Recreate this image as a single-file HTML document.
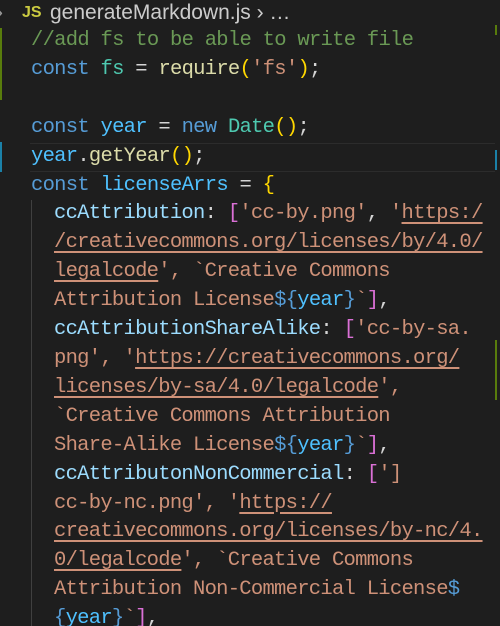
<!DOCTYPE html>
<html><head><meta charset="utf-8"><style>
html,body{margin:0;padding:0;width:500px;height:626px;overflow:hidden;background:#1e1e1e;}
body{position:relative;font-family:"Liberation Mono",monospace;}
.hdr{position:absolute;left:0;top:0;width:500px;height:26px;font-family:"Liberation Sans",sans-serif;font-size:21px;color:#cccccc;line-height:26px;}
.code{position:absolute;left:31px;top:27px;font-size:20.5px;letter-spacing:-0.72px;line-height:28.9px;white-space:pre;color:#d4d4d4;}
.k{color:#569cd6}.v{color:#4fc1ff}.c{color:#6a9955}.f{color:#dcdcaa}.y{color:#ffd700}.p{color:#da70d6}.s{color:#ce9178}.t{color:#4ec9b0}.pr{color:#9cdcfe}
.u{text-decoration:underline;text-underline-offset:4px}
.ind{margin-left:23px}
</style></head><body>
<div class="hdr"><span style="position:absolute;left:-4px;color:#999">›</span><span style="position:absolute;left:22px;color:#cbcb41;font-weight:bold;font-size:16px">JS</span><span style="position:absolute;left:50px">generateMarkdown.js › …</span></div>
<div style="position:absolute;left:0;top:28px;width:2px;height:72px;background:#587c0c"></div>
<div style="position:absolute;left:0;top:142px;width:2px;height:30px;background:#1b81a8"></div>
<div style="position:absolute;left:30px;top:143px;width:465px;height:27px;border-top:1px solid #2c2c2c;border-bottom:1px solid #2c2c2c"></div>
<div style="position:absolute;left:31px;top:200px;width:1px;height:426px;background:#404040"></div>
<div style="position:absolute;left:495px;top:25px;width:2px;height:10px;background:#587c0c"></div>
<div style="position:absolute;left:495px;top:150px;width:2px;height:20px;background:#1b81a8"></div>
<div style="position:absolute;left:495px;top:340px;width:2px;height:60px;background:#587c0c"></div>
<div class="code"><span class="c">//add fs to be able to write file</span>
<span class="k">const</span> <span class="t">fs</span> = <span class="f">require</span><span class="y">(</span><span class="s">'fs'</span><span class="y">)</span>;

<span class="k">const</span> <span class="v">year</span> = <span class="k">new</span> <span class="t">Date</span><span class="y">()</span>;
<span class="v">year</span>.<span class="f">getYear</span><span class="y">()</span>;
<span class="k">const</span> <span class="v">licenseArrs</span> = <span class="y">{</span>
<span class="ind"><span class="pr">ccAttribution</span>: <span class="p">[</span><span class="s">'cc-by.png'</span>, <span class="s">'<span class="u">https:/</span></span></span>
<span class="ind s"><span class="u">/creativecommons.org/licenses/by/4.0/</span></span>
<span class="ind s"><span class="u">legalcode</span>', `Creative Commons</span>
<span class="ind"><span class="s">Attribution License</span><span class="k">${</span><span class="v">year</span><span class="k">}</span><span class="s">`</span><span class="p">]</span>,</span>
<span class="ind"><span class="pr">ccAttributionShareAlike</span>: <span class="p">[</span><span class="s">'cc-by-sa.</span></span>
<span class="ind s">png', '<span class="u">https://creativecommons.org/</span></span>
<span class="ind s"><span class="u">licenses/by-sa/4.0/legalcode</span>',</span>
<span class="ind s">`Creative Commons Attribution</span>
<span class="ind"><span class="s">Share-Alike License</span><span class="k">${</span><span class="v">year</span><span class="k">}</span><span class="s">`</span><span class="p">]</span>,</span>
<span class="ind"><span class="pr">ccAttributonNonCommercial</span>: <span class="p">[</span><span class="s">']</span></span>
<span class="ind s">cc-by-nc.png', '<span class="u">https://</span></span>
<span class="ind s"><span class="u">creativecommons.org/licenses/by-nc/4.</span></span>
<span class="ind s"><span class="u">0/legalcode</span>', `Creative Commons</span>
<span class="ind"><span class="s">Attribution Non-Commercial License</span><span class="k">$</span></span>
<span class="ind"><span class="k">{</span><span class="v">year</span><span class="k">}</span><span class="s">`</span><span class="p">]</span>,</span></div>
</body></html>
